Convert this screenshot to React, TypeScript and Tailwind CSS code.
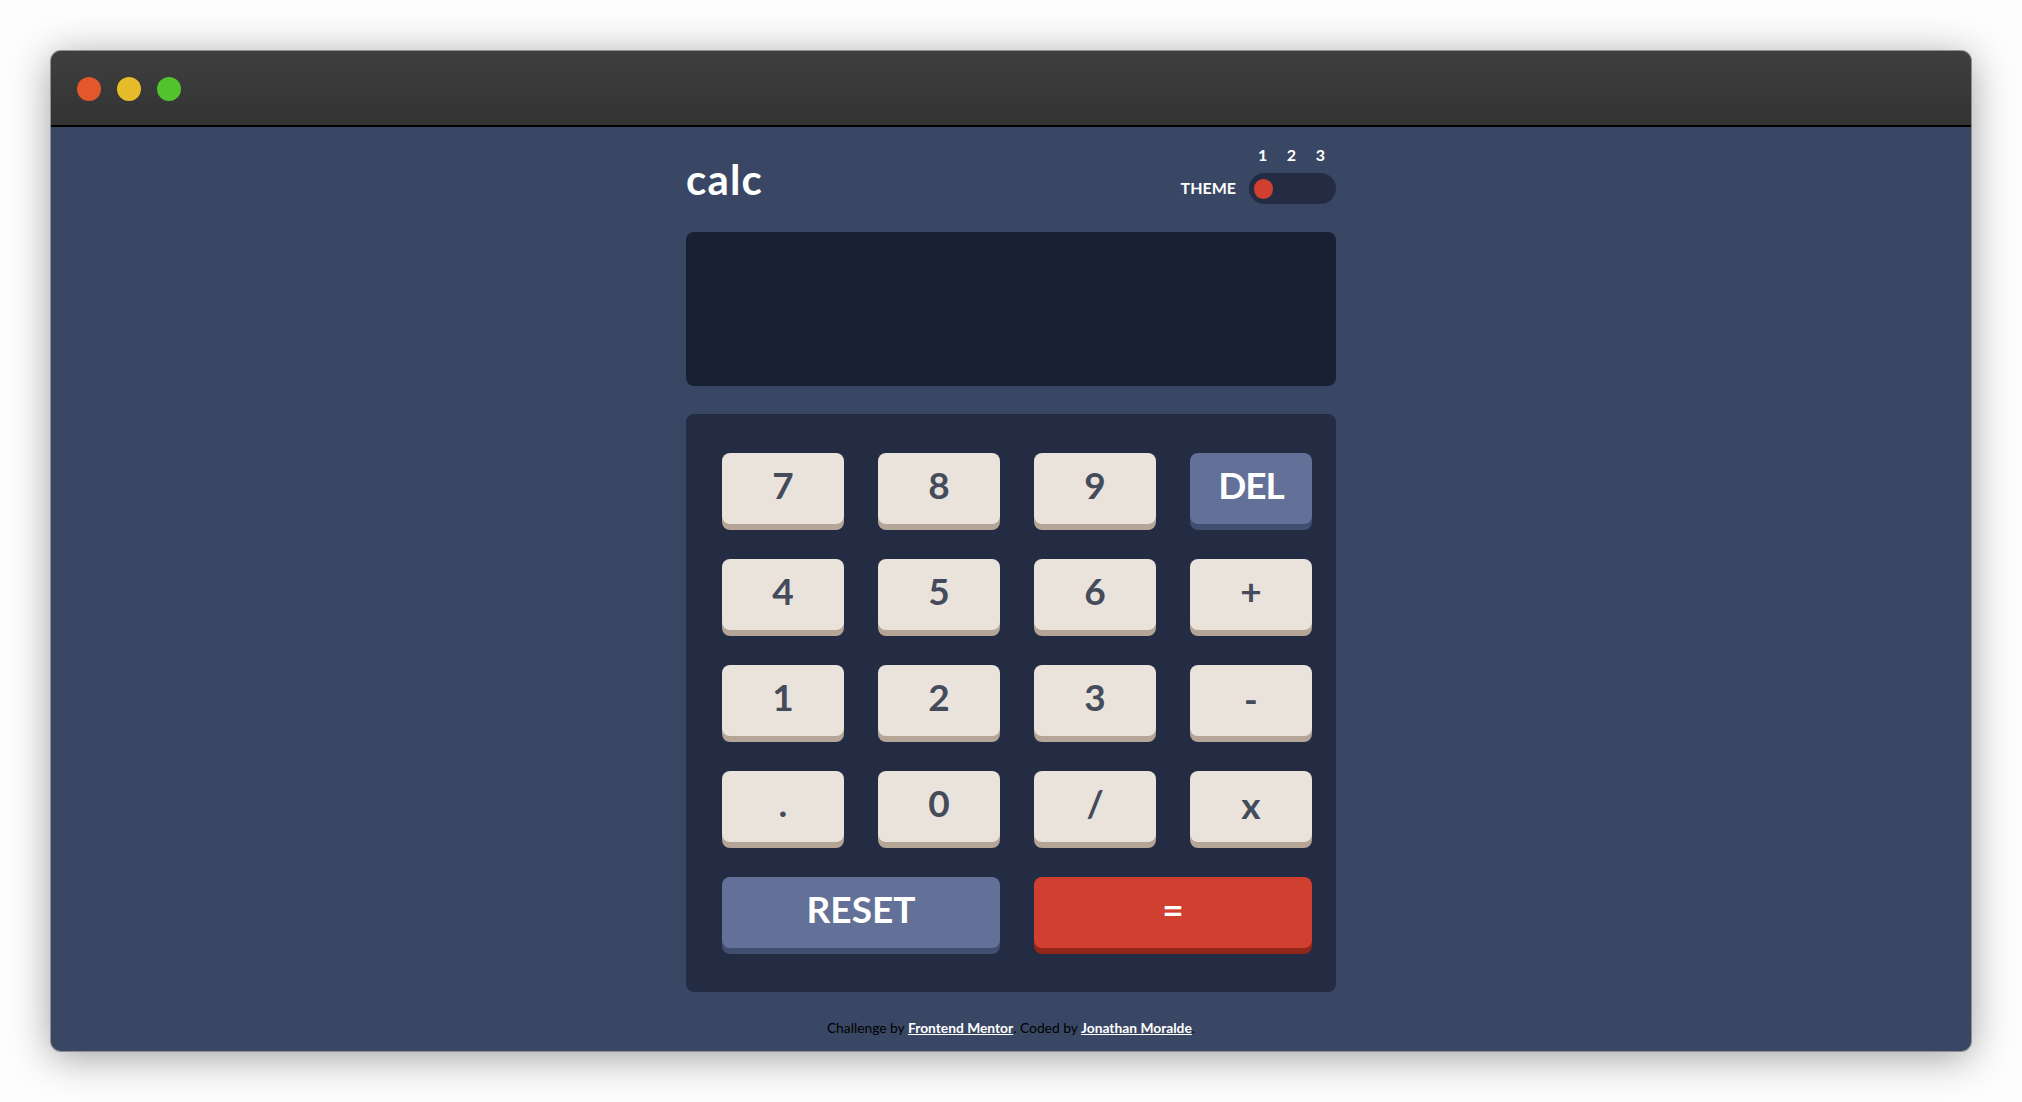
const KEYS = ['7', '8', '9', 'DEL', '4', '5', '6', '+', '1', '2', '3', '-', '.', '0', '/', 'x']

function Key({ label, tone = 'light', wide = false }: { label: string; tone?: 'light' | 'blue' | 'red'; wide?: boolean }) {
  const toneClass =
    tone === 'blue'
      ? 'bg-[#637097] text-white shadow-[0_6px_0_#404e72]'
      : tone === 'red'
        ? 'bg-[#d03f2f] text-white shadow-[0_6px_0_#93261a]'
        : 'bg-[#eae3dc] text-[#444b5a] shadow-[0_6px_0_#b4a597]'
  // x and - sit a little lower in the reference
  const dropClass = label === 'x' || label === '-' ? 'pb-[4px]' : 'pb-[8px]'
  return (
    <button
      type="button"
      className={`h-[71px] rounded-[8px] text-[37px] font-bold leading-none ${dropClass} ${toneClass} ${wide ? 'col-span-2' : ''} ${label === 'DEL' ? 'tracking-[-1px]' : ''}`}
    >
      {label}
    </button>
  )
}

export default function App() {
  return (
    <div className="h-[1102px] overflow-hidden bg-[#fdfdfd] px-[51px] pt-[51px] font-['Lato',sans-serif]">
      <div className="flex h-[1000px] flex-col overflow-hidden rounded-[10px] bg-[#3a4764] shadow-[0_0_0_1px_#8f8f8f,0_6px_40px_rgba(0,0,0,0.38)]">
        <div className="flex h-[76px] shrink-0 items-center gap-4 border-b-[2px] border-black bg-gradient-to-b from-[#3f3f3f] to-[#333333] pl-[26px] pt-[2px]">
          <span className="h-6 w-6 rounded-full bg-[#e2572b]" />
          <span className="h-6 w-6 rounded-full bg-[#e6bc2a]" />
          <span className="h-6 w-6 rounded-full bg-[#52c32d]" />
        </div>

        <main className="mx-auto w-[650px]">
          <header className="flex h-[105px] items-start justify-between">
            <h1 className="mt-[28px] text-[42px] font-bold leading-[48px] tracking-[1.2px] text-white">calc</h1>
            <div className="mt-[20px] flex items-end gap-[13px]">
              <span className="mb-[6px] text-[16px] font-bold leading-[20px] text-white">THEME</span>
              <div>
                <div className="flex justify-between pb-[10px] pl-[9px] pr-[11px] text-[16px] font-bold leading-[16px] text-white">
                  <span>1</span>
                  <span>2</span>
                  <span>3</span>
                </div>
                <div className="flex h-[31px] w-[87px] items-center rounded-full bg-[#232c43] pl-[5px]">
                  <span className="h-[20px] w-[19px] rounded-full bg-[#d03f2f]" />
                </div>
              </div>
            </div>
          </header>

          <div className="h-[154px] rounded-[8px] bg-[#182034]" />

          <div className="mt-[28px] grid h-[578px] grid-cols-4 content-start gap-x-[34px] gap-y-[35px] rounded-[8px] bg-[#232c43] pl-[36px] pr-[24px] pt-[39px]">
            {KEYS.map((key) => (
              <Key key={key} label={key} tone={key === 'DEL' ? 'blue' : 'light'} />
            ))}
            <Key label="RESET" tone="blue" wide />
            <Key label="=" tone="red" wide />
          </div>

          <p className="mt-[27px] text-center text-[13.8px] leading-[18px] text-black">
            Challenge by{' '}
            <a href="#" className="font-bold text-white underline">
              Frontend Mentor
            </a>
            . Coded by{' '}
            <a href="#" className="font-bold text-white underline">
              Jonathan Moralde
            </a>
            .
          </p>
        </main>
      </div>
    </div>
  )
}
